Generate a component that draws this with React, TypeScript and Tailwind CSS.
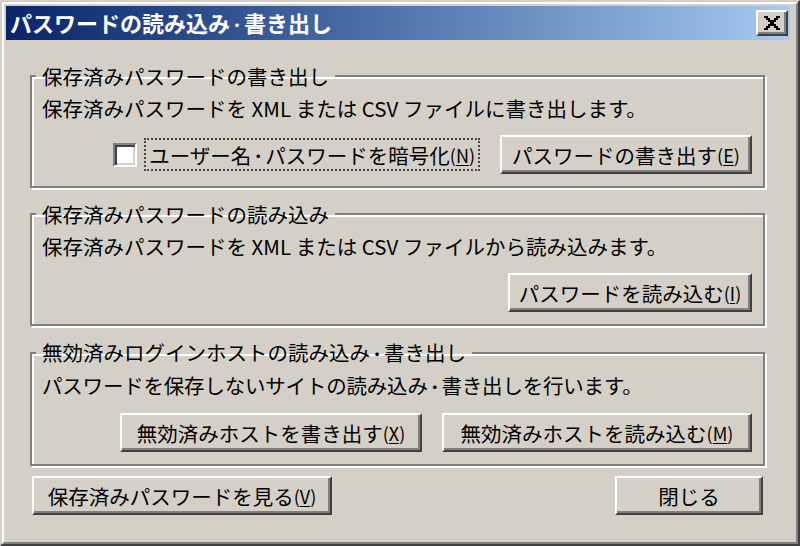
import React from "react";

const raised =
  "bg-[#d4d0c8] border-2 border-t-white border-l-white border-r-[#404040] border-b-[#404040] shadow-[inset_-2px_-2px_0_#808080]";

function Button({ children, className }: { children: React.ReactNode; className: string }) {
  return (
    <button
      className={`${raised} h-[39px] flex items-center justify-center text-black text-[20.5px] leading-[28px] ${className}`}
    >
      {children}
    </button>
  );
}

function Key({ k }: { k: string }) {
  return (
    <span className="text-[18px]">
      (<span className="underline underline-offset-2">{k}</span>)
    </span>
  );
}

// the old gothic font has a narrow middle dot
function Dot() {
  return <span className="text-[14px] font-bold align-[2px]">・</span>;
}

function Group({ title, children }: { title: React.ReactNode; children: React.ReactNode }) {
  return (
    <fieldset className="border-2 border-[#808080] shadow-[inset_2px_2px_0_#fff,2px_2px_0_#fff] pl-[4px] pr-[11px] pt-[4px] pb-[12px]">
      <legend className="px-[6px] text-[20.5px] leading-[28px] text-black">{title}</legend>
      <div className="pl-[6px] flex flex-col">{children}</div>
    </fieldset>
  );
}

function CloseGlyph() {
  // marlett style close cross, 8x7 pixels drawn at 2x
  const rows = ["XX....XX", ".XX..XX.", "..XXXX..", "...XX...", "..XXXX..", ".XX..XX.", "XX....XX"];
  return (
    <svg width="16" height="14" viewBox="0 0 8 7" shapeRendering="crispEdges">
      {rows.flatMap((r, y) =>
        r.split("").map((c, x) => (c === "X" ? <rect key={`${x}-${y}`} x={x} y={y} width="1" height="1" fill="#000" /> : null))
      )}
    </svg>
  );
}

export default function App() {
  return (
    <div className="w-[800px] h-[546px] border-2 border-t-[#d4d0c8] border-l-[#d4d0c8] border-r-[#404040] border-b-[#404040] bg-[#d4d0c8] font-['Noto_Sans_CJK_JP',sans-serif]">
      <div className="h-full border-2 border-t-white border-l-white border-r-[#808080] border-b-[#808080] pt-[2px] pl-[2px] pr-[6px] flex flex-col">
        {/* title bar */}
        <div className="h-[34px] shrink-0 bg-linear-to-r from-[#0a246a] to-[#a6caf0] flex items-center justify-between pl-[4px] pr-[2px]">
          <span className="text-white font-bold text-[22px] leading-[28px]">
            パスワードの読み込み<Dot />書き出し
          </span>
          <div className={`${raised} w-[32px] h-[26px] flex items-center justify-center`}>
            <CloseGlyph />
          </div>
        </div>

        <div className="flex flex-col pl-[24px] pr-[25px] pt-[22px] gap-[12px] text-black">
          <Group title="保存済みパスワードの書き出し">
            <p className="text-[20.5px] leading-[28px]">保存済みパスワードを XML または CSV ファイルに書き出します。</p>
            <div className="mt-[13px] flex items-center justify-end">
              <span className="w-[24px] h-[24px] bg-white border-2 border-t-[#808080] border-l-[#808080] border-r-white border-b-white shadow-[inset_2px_2px_0_#404040,inset_-2px_-2px_0_#d4d0c8]" />
              <span className="ml-[7px] h-[33px] border-2 border-dotted border-[#444] px-[3px] flex items-center text-[20.5px] leading-[28px]">
                ユーザー名<Dot />パスワードを暗号化<Key k="N" />
              </span>
              <Button className="ml-[20px] w-[252px]">
                パスワードの書き出す<Key k="E" />
              </Button>
            </div>
          </Group>

          <Group title="保存済みパスワードの読み込み">
            <p className="text-[20.5px] leading-[28px]">保存済みパスワードを XML または CSV ファイルから読み込みます。</p>
            <div className="mt-[13px] flex items-center justify-end">
              <Button className="w-[244px]">
                パスワードを読み込む<Key k="I" />
              </Button>
            </div>
          </Group>

          <Group
            title={
              <>
                無効済みログインホストの読み込み<Dot />書き出し
              </>
            }
          >
            <p className="text-[20.5px] leading-[28px] tracking-[-0.2px]">
              パスワードを保存しないサイトの読み込み<Dot />書き出しを行います。
            </p>
            <div className="mt-[13px] flex items-center justify-end gap-[20px]">
              <Button className="w-[302px]">
                無効済みホストを書き出す<Key k="X" />
              </Button>
              <Button className="w-[310px]">
                無効済みホストを読み込む<Key k="M" />
              </Button>
            </div>
          </Group>

          <div className="mt-[-2px] px-[2px] flex items-center justify-between">
            <Button className="w-[300px]">
              保存済みパスワードを見る<Key k="V" />
            </Button>
            <Button className="w-[148px]">閉じる</Button>
          </div>
        </div>
      </div>
    </div>
  );
}
